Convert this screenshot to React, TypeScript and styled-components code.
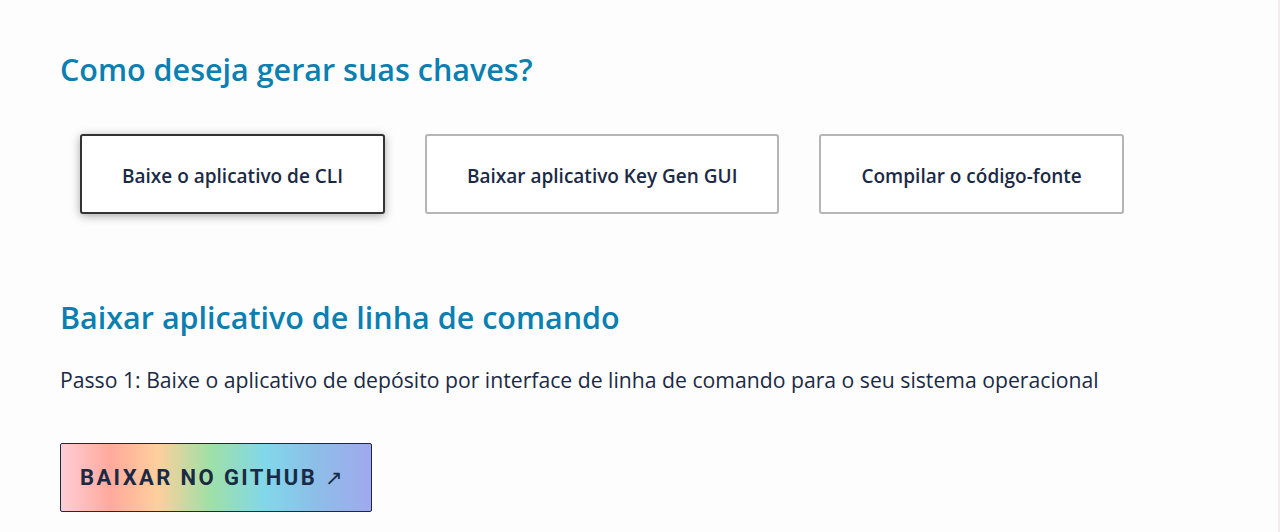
import styled, { createGlobalStyle } from "styled-components";

const GlobalStyle = createGlobalStyle`
  html, body {
    margin: 0;
    padding: 0;
    background: #fdfdfd;
  }
  body {
    font-family: "Open Sans", "Noto Sans", sans-serif;
    color: #1b2a44;
  }
`;

const Page = styled.main`
  min-height: 532px;
  box-sizing: border-box;
  padding: 49px 60px 0;
  border-right: 2px solid #f3ecec;
`;

const Heading = styled.h2`
  margin: 0;
  font-size: 30.5px;
  font-weight: 600;
  line-height: 40px;
  color: #0a7fb1;
`;

const Choices = styled.div`
  display: flex;
  gap: 40px;
  padding: 0 20px;
  margin: 45px 0 83px;
`;

const Choice = styled.button<{ $active?: boolean }>`
  height: 80px;
  padding: 3px 40px 0;
  background: #fff;
  border: 2px solid ${(p) => (p.$active ? "#333" : "#b5b5b5")};
  border-radius: 3px;
  box-shadow: ${(p) => (p.$active ? "0 2px 10px rgba(0, 0, 0, 0.35)" : "none")};
  font-family: "Open Sans", "Noto Sans", sans-serif;
  font-size: 19px;
  font-weight: 600;
  color: #1b2a44;
  cursor: pointer;
`;

const Step = styled.p`
  margin: 29px 0 49px;
  font-size: 21.2px;
  line-height: 28px;
  color: #1b2a44;
`;

const GithubLink = styled.a`
  display: inline-flex;
  align-items: center;
  height: 69px;
  box-sizing: border-box;
  padding: 0 28px 0 19px;
  border: 1px solid #1b2a44;
  border-radius: 2px;
  background: linear-gradient(
    to right,
    #ffcdd6 0%,
    #ffa99d 16%,
    #fecf9c 31%,
    #9fe0a6 48%,
    #81d7ea 66%,
    #8dbde8 83%,
    #a0a9ee 100%
  );
  font-family: Roboto, "Liberation Sans", sans-serif;
  font-size: 22px;
  font-weight: 700;
  letter-spacing: 2.4px;
  color: #1b2a44;
  text-decoration: none;
`;

const Arrow = styled.span`
  margin-left: 8px;
  font-weight: 400;
  font-size: 21px;
  letter-spacing: 0;
`;

export default function App() {
  return (
    <>
      <GlobalStyle />
      <Page>
        <Heading>Como deseja gerar suas chaves?</Heading>
        <Choices>
          <Choice $active>Baixe o aplicativo de CLI</Choice>
          <Choice>Baixar aplicativo Key Gen GUI</Choice>
          <Choice>Compilar o código-fonte</Choice>
        </Choices>
        <Heading>Baixar aplicativo de linha de comando</Heading>
        <Step>
          Passo 1: Baixe o aplicativo de depósito por interface de linha de comando para o seu
          sistema operacional
        </Step>
        <GithubLink href="#">
          BAIXAR NO GITHUB<Arrow>↗</Arrow>
        </GithubLink>
      </Page>
    </>
  );
}
